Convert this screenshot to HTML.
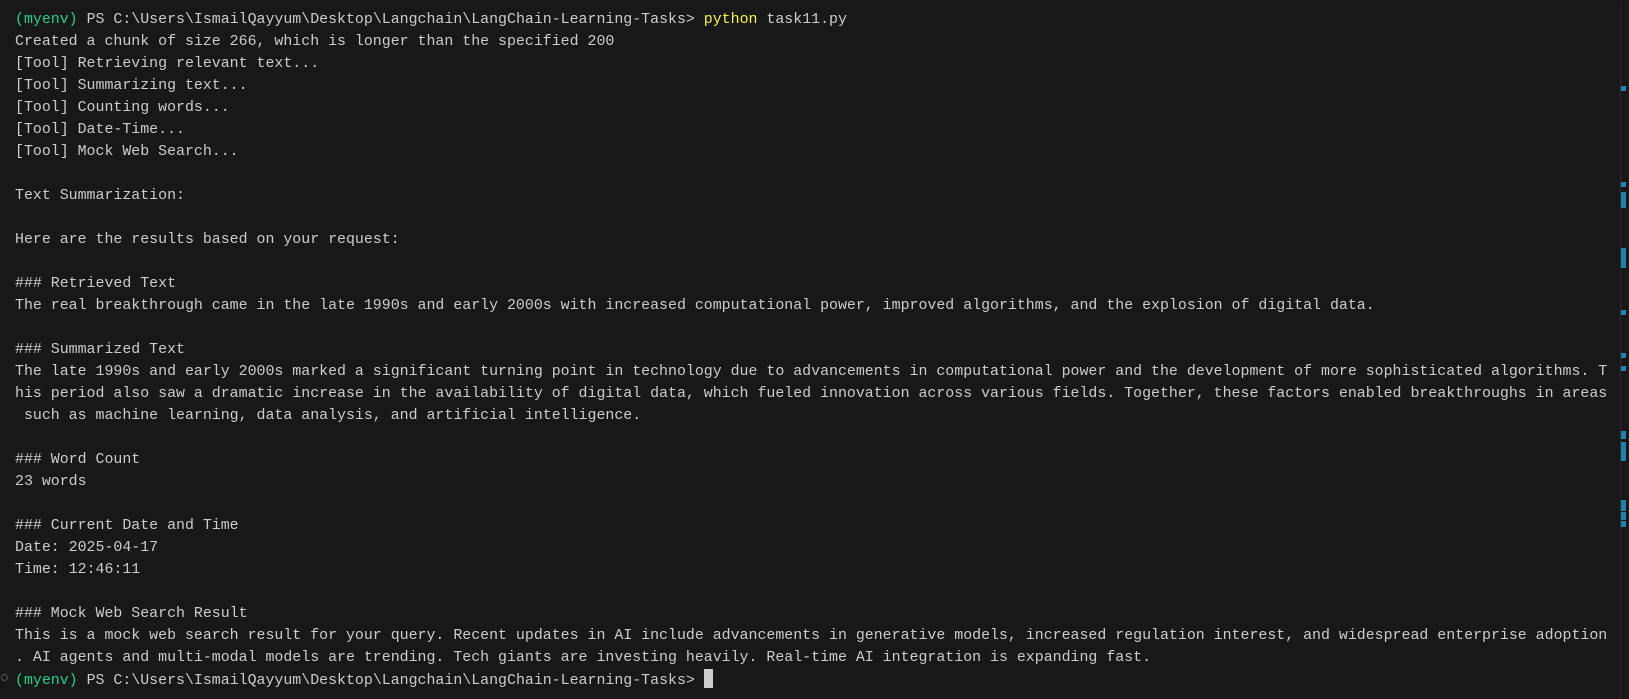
<!DOCTYPE html>
<html><head><meta charset="utf-8"><style>
html,body{margin:0;padding:0;background:#181818;width:1629px;height:699px;overflow:hidden}
pre{margin:0;position:absolute;left:15px;top:9px;font-family:"Liberation Mono",monospace;font-size:14.92px;line-height:22px;color:#cccccc;white-space:pre}
.g{color:#23d18b}.y{color:#f5f543}
.cur{display:inline-block;width:9px;height:19px;background:#cccccc;vertical-align:-4px}
.sb{position:absolute;left:1620px;top:5px;width:1px;height:694px;background:#2b2b2b}
.m{position:absolute;left:1621px;width:5px;background:#1f7fad}
.dot{position:absolute;left:1px;top:674px;width:5px;height:5px;border:1px solid #555;border-radius:50%}
</style></head><body>
<pre><span class="g">(myenv)</span> PS C:\Users\IsmailQayyum\Desktop\Langchain\LangChain-Learning-Tasks&gt; <span class="y">python</span> task11.py
Created a chunk of size 266, which is longer than the specified 200
[Tool] Retrieving relevant text...
[Tool] Summarizing text...
[Tool] Counting words...
[Tool] Date-Time...
[Tool] Mock Web Search...

Text Summarization:

Here are the results based on your request:

### Retrieved Text
The real breakthrough came in the late 1990s and early 2000s with increased computational power, improved algorithms, and the explosion of digital data.

### Summarized Text
The late 1990s and early 2000s marked a significant turning point in technology due to advancements in computational power and the development of more sophisticated algorithms. T
his period also saw a dramatic increase in the availability of digital data, which fueled innovation across various fields. Together, these factors enabled breakthroughs in areas
 such as machine learning, data analysis, and artificial intelligence.

### Word Count
23 words

### Current Date and Time
Date: 2025-04-17
Time: 12:46:11

### Mock Web Search Result
This is a mock web search result for your query. Recent updates in AI include advancements in generative models, increased regulation interest, and widespread enterprise adoption
. AI agents and multi-modal models are trending. Tech giants are investing heavily. Real-time AI integration is expanding fast.
<span class="g">(myenv)</span> PS C:\Users\IsmailQayyum\Desktop\Langchain\LangChain-Learning-Tasks&gt; <span class="cur"></span></pre>
<div class="dot"></div>
<div class="sb"></div>
<div class="m" style="top:86px;height:5px"></div>
<div class="m" style="top:182px;height:5px"></div>
<div class="m" style="top:192px;height:16px"></div>
<div class="m" style="top:248px;height:20px"></div>
<div class="m" style="top:310px;height:5px"></div>
<div class="m" style="top:353px;height:5px"></div>
<div class="m" style="top:366px;height:5px"></div>
<div class="m" style="top:431px;height:8px"></div>
<div class="m" style="top:442px;height:19px"></div>
<div class="m" style="top:500px;height:11px"></div>
<div class="m" style="top:512px;height:8px"></div>
<div class="m" style="top:521px;height:6px"></div>
</body></html>
